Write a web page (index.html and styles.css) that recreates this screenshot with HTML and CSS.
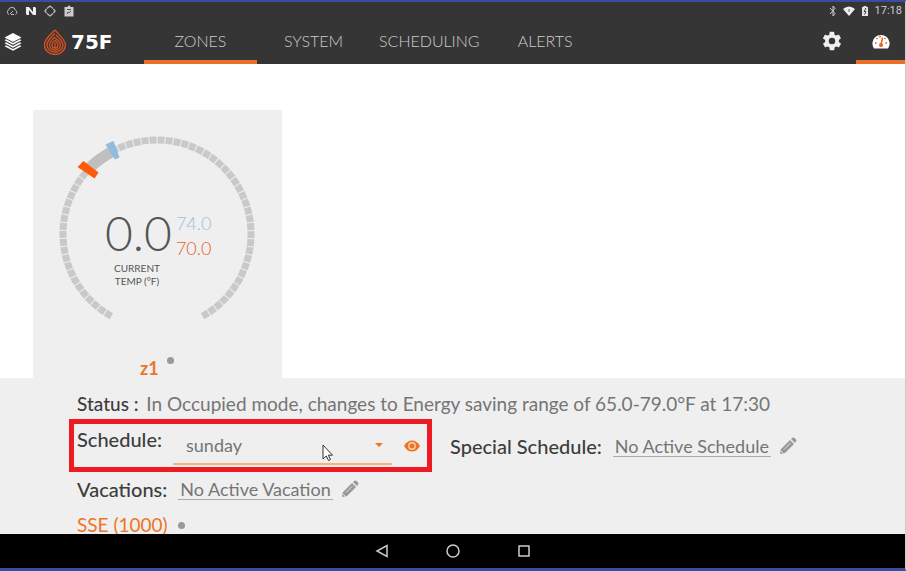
FILE: index.html
```html
<!DOCTYPE html>
<html lang="en">
<head>
    <meta charset="UTF-8">
    <title>75F Zones</title>
    <link rel="stylesheet" href="styles.css">
</head>
<body>
    <header>
        <div class="statusbar">
            <svg width="12" height="10" viewBox="0 0 12 10" fill="none" stroke="#bbb"><path d="M3 8.500a2.500 2.500 0 0 1-.5-4.500 3.500 3.500 0 0 1 6.800 0 2.500 2.500 0 0 1 .2 4.500M4 8l3-3M5 8.500h3"/></svg>
            <svg width="12" height="10" viewBox="0 0 12 10" fill="#eee"><path d="M1 1h3l4 5V1h2l1 1v7H8L4 4v5H2L1 8z"/></svg>
            <svg width="12" height="12" viewBox="0 0 12 12" fill="none" stroke="#bbb" stroke-width="1.300"><path d="M3 3.500 6 1l3 2.500M9 8.500 6 11 3 8.500M2.500 4 1 6l1.500 2M9.500 4 11 6 9.500 8"/></svg>
            <svg width="12" height="12" viewBox="0 0 12 12"><path d="M1.500 2h3a1.500 1.500 0 0 1 3 0h3v9.500h-9z" fill="#ccc"/><path d="M4 4.500h4M4 9l1-2 1 1 2-2" fill="none" stroke="#555"/></svg>
            <div class="system">
                <svg width="8" height="12" viewBox="0 0 8 12" fill="none" stroke="#ccc"><path d="M1 3l5 5.500L4 11V1l2 2.500L1 9"/></svg>
                <svg width="12" height="10" viewBox="0 0 12 10"><path d="M0 3q6-5 12 0L6 10z" fill="#eee"/><path d="M6 3v3" stroke="#666"/></svg>
                <svg width="8" height="12" viewBox="0 0 8 12"><path d="M1 2h1.500V1h3v1H7v9H1z" fill="#e4e4e4"/><path d="M5 3 3 6.500h2L3.500 9.500" fill="none" stroke="#444"/></svg>
                <span>17:18</span>
            </div>
        </div>
        <div class="toolbar">
            <button class="icon layers" aria-label="Floors">
                <svg width="18" height="18" viewBox="0 0 18 18" fill="#fff"><path d="M9 0l8.500 4.500L9 9 .5 4.500z"/><path d="M.5 7.200l1.700-.9L9 10l6.800-3.700 1.700.9L9 11.700z"/><path d="M.5 10.200l1.700-.9L9 13l6.800-3.700 1.700.9L9 14.700z"/><path d="M.5 13.200l1.700-.9L9 16l6.800-3.700 1.700.9L9 17.700z"/></svg>
            </button>
            <a class="logo" href="#">
                <svg width="24" height="26" viewBox="0 0 24 26" fill="none" stroke="#d9501e" stroke-width="1.300">
                    <path d="M12 1C7 6 1.500 10 1.500 16a10.300 9.400 0 0 0 20.800 0C22.300 10.500 17 7 12 1"/>
                    <path d="M12 4.500C8 9 4 11.500 4 16a8 7 0 0 0 16 0c0-4-4-7-7-10"/>
                    <path d="M12 8c-3 3-5.500 5-5.500 8a5.500 5 0 0 0 11 0c0-3-3-5-5.500-7"/>
                    <path d="M12 11.500c-1.500 1.500-3 2.500-3 4.500a3 3 0 0 0 6 0c0-2-1.500-3-3-4.500M12 14v4"/>
                </svg>
                <span>75F</span>
            </a>
            <nav>
                <a class="active" href="#">ZONES</a>
                <a href="#">SYSTEM</a>
                <a href="#">SCHEDULING</a>
                <a href="#">ALERTS</a>
            </nav>
            <button class="icon tab" aria-label="Settings">
                <svg width="22" height="22" viewBox="0 0 24 24" fill="#eee"><path d="M19.400 13c.1-.3.1-.6.1-1s0-.7-.1-1l2.100-1.600c.2-.2.2-.4.100-.6l-2-3.500c-.1-.2-.4-.3-.6-.2l-2.500 1c-.5-.4-1.100-.7-1.700-1l-.4-2.600c0-.3-.2-.5-.5-.5h-4c-.2 0-.4.200-.5.400l-.4 2.700c-.6.200-1.200.6-1.700 1l-2.500-1c-.2-.1-.5 0-.6.200l-2 3.500c-.1.200-.1.400.1.600L4.600 11c0 .3-.1.600-.1 1s0 .7.100 1l-2.200 1.600c-.2.200-.2.400-.1.600l2 3.500c.1.200.4.300.6.200l2.500-1c.5.400 1.100.7 1.700 1l.4 2.600c0 .3.200.5.500.5h4c.2 0 .4-.2.500-.4l.4-2.700c.6-.2 1.200-.6 1.700-1l2.500 1c.2.100.5 0 .6-.2l2-3.500c.1-.2.1-.4-.1-.6zM12 15.500a3.500 3.500 0 1 1 0-7 3.500 3.500 0 0 1 0 7z"/></svg>
            </button>
            <button class="icon tab active" aria-label="Dashboard">
                <svg width="18" height="16" viewBox="0 0 18 16"><path d="M2 15.500a8.600 8.600 0 1 1 14 0z" fill="#fff"/><path d="M9 12 10.500 4.500" stroke="#e8641b" stroke-width="1.500"/><circle cx="9" cy="12" r="2" fill="#e8641b"/><path d="M3 10h1.500M4.500 5l1 1M8 3v1.500M13.500 5l-1 1M13.500 10H15" stroke="#c65a25" stroke-width="1.500"/></svg>
            </button>
        </div>
    </header>

    <main>
        <section class="zone">
            <div class="gauge">
                <svg width="249" height="220" viewBox="0 0 249 220" fill="none">
                    <path d="M78.400 206.200A94 94 0 1 1 169.600 206.200" stroke="#c9c9c9" stroke-width="7" stroke-dasharray="7 1"/>
                    <path d="M56 58.500A94 94 0 0 1 79.500 41.500" stroke="#bfbfbf" stroke-width="11"/>
                    <path d="M50.500 51 65.500 62.500 61.500 68.500 44.500 57z" fill="#ff5a0a"/>
                    <path d="M72.500 34.500 80.500 31 86.500 47.500 82 49.500z" fill="#8fbce0"/>
                </svg>
                <div class="reading">
                    <div class="current">
                        <strong>0.0</strong>
                        <span>CURRENT<br>TEMP (°F)</span>
                    </div>
                    <div class="range">
                        <span class="cool">74.0</span>
                        <span class="heat">70.0</span>
                    </div>
                </div>
            </div>
            <h2>z1 <i class="dot"></i></h2>
        </section>

        <section class="details">
            <p class="status"><b>Status :</b> In Occupied mode, changes to Energy saving range of 65.0-79.0°F at 17:30</p>
            <div class="schedules">
                <div class="field highlight">
                    <label for="schedule">Schedule:</label>
                    <div class="select">
                        <select id="schedule">
                            <option>sunday</option>
                        </select>
                        <svg class="pointer" width="12" height="18" viewBox="0 0 12 18" fill="#fff" stroke="#333"><path d="M1 1v14l3.300-3 2.200 4.500 2-1-2.200-4.300H10.500z"/></svg>
                    </div>
                    <button class="icon view" aria-label="View schedule">
                        <svg width="16" height="12" viewBox="0 0 16 12"><path d="M0 6Q3 .5 8 .5T16 6Q13 11.500 8 11.500T0 6z" fill="#ee7526"/><circle cx="8" cy="6" r="3.200" fill="none" stroke="#fbd3b4" stroke-width="1.400"/></svg>
                    </button>
                </div>
                <div class="field">
                    <b>Special Schedule:</b>
                    <span class="value">No Active Schedule</span>
                    <button class="icon" aria-label="Edit special schedule">
                        <svg width="18" height="18" viewBox="0 0 18 18" fill="#999"><path d="M1 17l1-5L11 3l4 4-9 9zM12 2l1.500-1.300q1-.7 2 .2l1.500 1.500q.9 1 .1 2L16 6z"/><path d="M5 12.500l6.500-6.500M2 14l2 2" stroke="#ddd"/></svg>
                    </button>
                </div>
            </div>
            <div class="field">
                <b>Vacations:</b>
                <span class="value">No Active Vacation</span>
                <button class="icon" aria-label="Edit vacations">
                    <svg width="18" height="18" viewBox="0 0 18 18" fill="#999"><path d="M1 17l1-5L11 3l4 4-9 9zM12 2l1.500-1.300q1-.7 2 .2l1.500 1.500q.9 1 .1 2L16 6z"/><path d="M5 12.500l6.500-6.500M2 14l2 2" stroke="#ddd"/></svg>
                </button>
            </div>
            <h3>SSE (1000) <i class="dot"></i></h3>
        </section>
    </main>

    <footer>
        <button class="icon" aria-label="Back"><svg width="14" height="14" viewBox="0 0 14 14" fill="none" stroke="#ccc" stroke-width="1.500"><path d="M12 1.500v11L2 7z"/></svg></button>
        <button class="icon" aria-label="Home"><svg width="14" height="14" viewBox="0 0 14 14" fill="none" stroke="#ccc" stroke-width="1.500"><circle cx="7" cy="7" r="6"/></svg></button>
        <button class="icon" aria-label="Recent apps"><svg width="14" height="14" viewBox="0 0 14 14" fill="none" stroke="#ccc" stroke-width="1.500"><path d="M2 2h10v10H2z"/></svg></button>
    </footer>
</body>
</html>
```

FILE: styles.css
```css
* {
    box-sizing: border-box;
}
body {
    font-family: Lato, sans-serif;
    margin: 0;
    height: 100vh;
    display: flex;
    flex-direction: column;
    overflow: hidden;
    background: white;
    border-top: 2px solid #3b4ba0;
    border-bottom: 3px solid #3b4ba0;
    border-right: 1px solid #ccc;
}
svg {
    display: block;
}
a {
    color: inherit;
    text-decoration: none;
}
.icon {
    display: flex;
    align-items: center;
    justify-content: center;
    padding: 0;
    border: 0;
    background: none;
    cursor: pointer;
}

/* header */
header {
    background: #353535;
    color: #ccc;
}
.statusbar {
    display: flex;
    align-items: center;
    gap: 7px;
    height: 17px;
    padding: 0 3px 0 6px;
}
.system {
    display: flex;
    align-items: center;
    gap: 6px;
    margin-left: auto;
    font: 11px Roboto, sans-serif;
}
.toolbar {
    display: flex;
    height: 45px;
    padding-left: 4px;
}
.logo {
    display: flex;
    align-items: center;
    gap: 4px;
    width: 101px;
    margin-left: 21px;
    color: white;
    font: bold 20px "DejaVu Sans", sans-serif;
}
nav {
    display: flex;
    flex: 1;
}
nav a {
    display: flex;
    align-items: center;
    justify-content: center;
    min-width: 113px;
    padding: 0 9px;
    font-size: 16px;
    font-weight: 300;
}
nav a, .tab {
    border-top: 2px solid transparent;
    border-bottom: 4px solid transparent;
}
.tab {
    width: 49px;
}
nav .active, .tab.active {
    border-bottom-color: #e8702a;
}

/* zone card */
main {
    flex: 1;
    min-height: 0;
    overflow: hidden;
    display: flex;
    flex-direction: column;
    padding-top: 46px;
}
.zone {
    width: 249px;
    margin-left: 33px;
    background: #efefef;
}
.gauge {
    display: grid;
}
.gauge > * {
    grid-area: 1 / 1;
}
.reading {
    display: flex;
    gap: 4px;
    padding: 94px 0 0 72px;
}
.current {
    display: flex;
    flex-direction: column;
    color: #555;
    font-size: 10px;
    line-height: 13px;
}
.current strong {
    font-size: 48px;
    font-weight: 300;
    line-height: 58px;
}
.current span {
    width: 64px;
    text-align: center;
}
.range {
    display: flex;
    flex-direction: column;
    padding-top: 7px;
    font-size: 18px;
    font-weight: 300;
    line-height: 25px;
}
.cool {
    color: #a3bce0;
}
.heat {
    color: #e8602c;
}
h2, h3 {
    display: flex;
    gap: 8px;
    margin: 0;
    color: #ee7526;
}
h2 {
    height: 48px;
    padding: 27px 0 0 107px;
    font-size: 18px;
    line-height: 22px;
}
.dot {
    width: 7px;
    height: 7px;
    border-radius: 50%;
    background: #999;
}

/* zone details */
.details {
    flex: 1;
    padding: 14px 20px 0 77px;
    background: #efefef;
    color: #757575;
    font-size: 18px;
    line-height: 24px;
}
.details p {
    margin: 0;
    font-size: 19px;
}
.details b, label {
    margin-right: 3px;
    color: #3d3d3d;
    font-weight: 500;
}
.field b, label {
    font-size: 20px;
}
.schedules {
    display: flex;
    gap: 30px;
    padding: 10px 0 3px;
}
.field {
    display: flex;
    align-items: center;
    gap: 8px;
    height: 40px;
}
.value {
    padding: 0 2px;
    border-bottom: 1px solid #aaa;
    line-height: 20px;
}
.view {
    margin-left: 4px;
}
.select {
    position: relative;
    display: flex;
    width: 219px;
    height: 38px;
    border-bottom: 2px solid #f8b27c;
}
.select::after {
    content: "";
    align-self: center;
    margin-right: 9px;
    border: 4px solid transparent;
    border-top-color: #ee7526;
    border-bottom: 0;
}
select {
    flex: 1;
    padding: 0 13px;
    appearance: none;
    border: 0;
    background: none;
    color: inherit;
    font: inherit;
}
.pointer {
    position: absolute;
    left: 149px;
    top: 17px;
}
.highlight {
    position: relative;
}
.highlight label {
    align-self: flex-start;
    padding-top: 1px;
}
.highlight::before {
    content: "";
    position: absolute;
    inset: -7px -12px -6px -8px;
    border: 5px solid #ed1c24;
    pointer-events: none;
}
h3 {
    align-items: center;
    gap: 10px;
    padding-top: 4px;
    font-size: 19px;
    font-weight: 400;
}

/* android navigation */
footer {
    display: flex;
    justify-content: center;
    gap: 57px;
    height: 34px;
    background: black;
}
```
